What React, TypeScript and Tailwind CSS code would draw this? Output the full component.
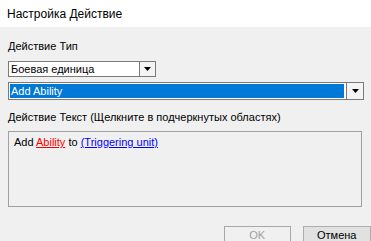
import React from "react";

function Arrow() {
  return (
    <svg width="7" height="4" viewBox="0 0 7 4">
      <path d="M0 0H7L3.5 4Z" fill="#000" />
    </svg>
  );
}

export default function App() {
  const font = { fontFamily: '"Liberation Sans", Arial, sans-serif' };
  return (
    <div className="w-[371px] h-[241px] overflow-hidden bg-[#f0f0f0] flex flex-col text-black" style={font}>
      <div className="h-[27px] bg-white flex items-center pl-[7px] text-[12px] shrink-0">
        Настройка Действие
      </div>
      <div className="flex flex-col pl-[8px] pt-[13px]">
        <div className="text-[11px] leading-[13px] h-[13px]">Действие Тип</div>
        <div className="mt-[8px] w-[148px] h-[16px] border border-[#7a7a7a] bg-white flex items-stretch">
          <div className="flex-1 flex items-center pl-[2px] text-[11px]">Боевая единица</div>
          <div className="w-[16px] border-l border-[#7a7a7a] bg-[#f4f4f4] flex items-center justify-center">
            <Arrow />
          </div>
        </div>
        <div className="mt-[5px] w-[356px] h-[18px] border border-[#7a7a7a] bg-white flex items-stretch">
          <div className="flex-1 p-[1px] pr-[2px]">
            <div className="h-full bg-[#0078d7] text-white text-[11px] flex items-center pl-[1px]">Add Ability</div>
          </div>
          <div className="w-[17px] border-l border-[#7a7a7a] bg-[#f4f4f4] flex items-center justify-center">
            <Arrow />
          </div>
        </div>
        <div className="mt-[11px] text-[11px] leading-[13px] h-[13px]">
          Действие Текст (Щелкните в подчеркнутых областях)
        </div>
        <div className="mt-[7px] w-[354px] h-[76px] border border-[#a0a0a0] pl-[5px] pt-[4px] text-[11px] leading-[13px]">
          Add <span className="text-[#ff0000] underline">Ability</span>{" "}to{" "}
          <span className="text-[#0000ff] underline">(Triggering unit)</span>
        </div>
        <div className="mt-[19px] flex gap-[12px] pl-[216px]">
          <div className="w-[68px] h-[23px] border border-[#a8a8a8] bg-[#f0f0f0] text-[#a0a0a0] text-[11px] leading-[13px] flex items-start justify-center pt-[2px]">
            OK
          </div>
          <div className="w-[70px] h-[23px] border border-[#adadad] bg-[#e1e1e1] text-[11px] leading-[13px] flex items-start justify-center pt-[2px]">
            Отмена
          </div>
        </div>
      </div>
    </div>
  );
}
